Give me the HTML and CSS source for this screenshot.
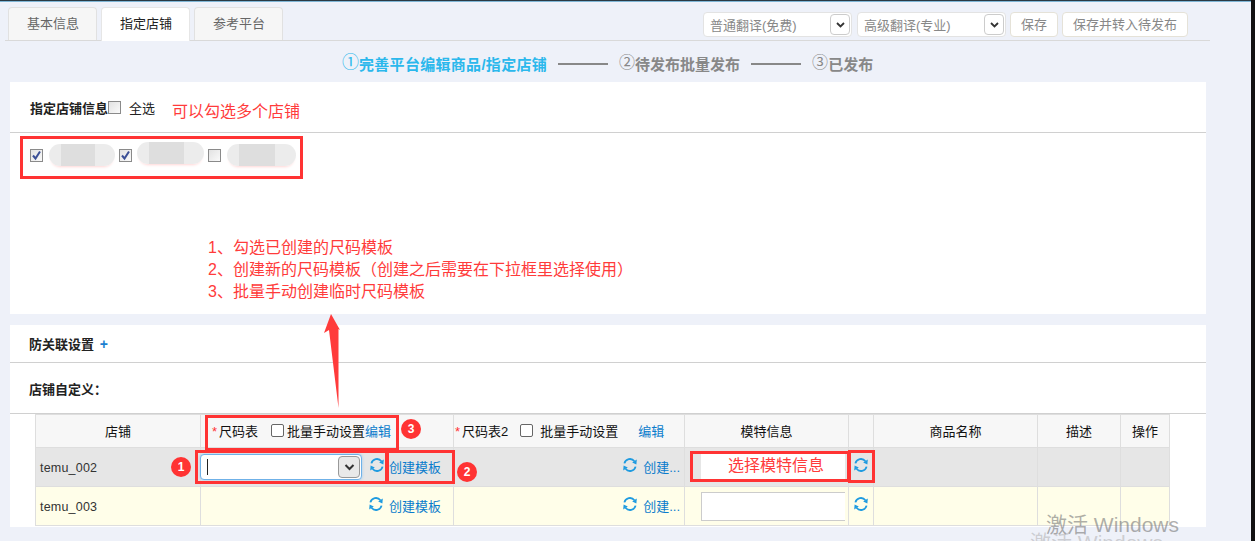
FILE: index.html
```html
<!DOCTYPE html>
<html lang="zh">
<head>
<meta charset="utf-8">
<title>指定店铺</title>
<link rel="stylesheet" href="styles.css">
</head>
<body>
<div class="topline"></div>
<div class="page">
  <div class="tabbar">
    <div class="tabs">
      <div class="tab">基本信息</div>
      <div class="tab active">指定店铺</div>
      <div class="tab">参考平台</div>
    </div>
    <div class="actions">
      <div class="fake-select"><span>普通翻译(免费)</span><i class="arrow"><svg width="9" height="6" viewBox="0 0 9 6"><path d="M1 1l3.5 3.5L8 1" fill="none" stroke="#333" stroke-width="1.8"/></svg></i></div>
      <div class="fake-select"><span>高级翻译(专业)</span><i class="arrow"><svg width="9" height="6" viewBox="0 0 9 6"><path d="M1 1l3.5 3.5L8 1" fill="none" stroke="#333" stroke-width="1.8"/></svg></i></div>
      <div class="btn b1">保存</div>
      <div class="btn b2">保存并转入待发布</div>
    </div>
  </div>
  <div class="steps">
    <span class="step on"><em>①</em>完善平台编辑商品/指定店铺</span>
    <span class="line"></span>
    <span class="step"><em>②</em>待发布批量发布</span>
    <span class="line"></span>
    <span class="step"><em>③</em>已发布</span>
  </div>
  <section class="panel p1">
    <div class="shop-head">
      <b>指定店铺信息</b><span class="cb"></span><span class="all">全选</span>
    </div>
    <div class="shop-list">
      <span class="cb checked"><svg width="13" height="13" viewBox="0 0 13 13"><path d="M3 6.5l2.5 3L10 2.5" fill="none" stroke="#3b4f96" stroke-width="2"/></svg></span><span class="blur b-a"></span>
      <span class="cb checked"><svg width="13" height="13" viewBox="0 0 13 13"><path d="M3 6.5l2.5 3L10 2.5" fill="none" stroke="#3b4f96" stroke-width="2"/></svg></span><span class="blur b-b"></span>
      <span class="cb"></span><span class="blur b-c"></span>
    </div>
  </section>
  <section class="panel p2">
    <div class="rel-row"><b>防关联设置</b> <span class="plus">+</span></div>
    <div class="custom-row"><b>店铺自定义：</b></div>
    <table class="grid">
      <colgroup>
        <col class="c1"><col class="c2"><col class="c3"><col class="c4"><col class="c5"><col class="c6"><col class="c7"><col class="c8">
      </colgroup>
      <thead>
        <tr>
          <th>店铺</th>
          <th class="left size1"><span class="req">*</span>尺码表<span class="tick t1"></span>批量手动设置<a class="link">编辑</a></th>
          <th class="left size2"><span class="req">*</span>尺码表2<span class="tick t2"></span>批量手动设置<a class="link l2">编辑</a></th>
          <th>模特信息</th>
          <th></th>
          <th>商品名称</th>
          <th>描述</th>
          <th>操作</th>
        </tr>
      </thead>
      <tbody>
        <tr class="r1">
          <td class="shop">temu_002</td>
          <td class="tools">
            <div class="tool-wrap">
              <div class="combo"><span class="caret"></span><i class="arrow big"><svg width="11" height="7" viewBox="0 0 11 7"><path d="M1.5 1l4 4 4-4" fill="none" stroke="#333" stroke-width="2"/></svg></i></div>
              <svg class="sync" viewBox="0 0 16 16"><use href="#sync"/></svg>
              <a class="link near">创建模板</a>
            </div>
          </td>
          <td class="tools">
            <div class="tool-wrap end"><svg class="sync" viewBox="0 0 16 16"><use href="#sync"/></svg><a class="link">创建...</a></div>
          </td>
          <td class="model"><div class="model-box"></div></td>
          <td class="only-sync"><svg class="sync" viewBox="0 0 16 16"><use href="#sync"/></svg></td>
          <td></td><td></td><td></td>
        </tr>
        <tr class="r2">
          <td class="shop">temu_003</td>
          <td class="tools">
            <div class="tool-wrap end wide"><svg class="sync" viewBox="0 0 16 16"><use href="#sync"/></svg><a class="link">创建模板</a></div>
          </td>
          <td class="tools">
            <div class="tool-wrap end"><svg class="sync" viewBox="0 0 16 16"><use href="#sync"/></svg><a class="link">创建...</a></div>
          </td>
          <td class="model"><div class="model-box"></div></td>
          <td class="only-sync"><svg class="sync" viewBox="0 0 16 16"><use href="#sync"/></svg></td>
          <td></td><td></td><td></td>
        </tr>
      </tbody>
    </table>
  </section>
</div>

<svg class="defs" width="0" height="0"><defs>
  <symbol id="sync" viewBox="0 0 16 16">
    <path d="M2.4 6.4A5.7 5.7 0 0 1 12.4 4.2" fill="none" stroke="#1f9be0" stroke-width="1.8"/>
    <path d="M14.8 2.6l-.4 4.8-4.2-2z" fill="#1f9be0"/>
    <path d="M13.6 9.6A5.7 5.7 0 0 1 3.6 11.8" fill="none" stroke="#1f9be0" stroke-width="1.8"/>
    <path d="M1.2 13.4l.4-4.8 4.2 2z" fill="#1f9be0"/>
  </symbol>
</defs></svg>

<!-- annotations drawn over the page -->
<div class="note n-multi">可以勾选多个店铺</div>
<div class="note n-list">1、勾选已创建的尺码模板<br>2、创建新的尺码模板（创建之后需要在下拉框里选择使用）<br>3、批量手动创建临时尺码模板</div>
<div class="note n-model">选择模特信息</div>
<div class="rbox x-shops"></div>
<div class="rbox x-head"></div>
<div class="rbox x-combo"></div>
<div class="rbox x-create"></div>
<div class="rbox x-model"></div>
<div class="rbox x-sync"></div>
<div class="dot d1">1</div>
<div class="dot d2">2</div>
<div class="dot d3">3</div>
<svg class="up-arrow" width="18" height="96" viewBox="0 0 18 96"><path d="M8 1L17 17 15.5 16 15.5 95 6 17 1 20z" fill="#ff3b3b"/></svg>
<div class="watermark w1">激活 Windows</div>
<div class="watermark w2">激活 Windows</div>
<div class="edge"></div>
</body>
</html>
```
FILE: styles.css
```css
* { box-sizing: border-box; }
html, body { margin: 0; padding: 0; }
body {
  width: 1255px;
  height: 541px;
  overflow: hidden;
  position: relative;
  background: #eef1f9;
  font-family: "Liberation Sans", "Noto Sans CJK SC", sans-serif;
  font-size: 13px;
  color: #222;
}
.defs { position: absolute; }
.topline { height: 2px; background: linear-gradient(#2a3a44 50%, #7fb6d6 50%); }
.page { padding: 5px 0 0 5px; width: 1210px; }
.tabbar {
  display: flex;
  justify-content: space-between;
  height: 34px;
  border-bottom: 1px solid #d9d9d9;
  padding-left: 3px;
}
.tabs { display: flex; gap: 4px; }
.tab {
  width: 89px;
  height: 33px;
  background: #f6f6f6;
  border: 1px solid #e1e1e1;
  border-bottom: 0;
  border-radius: 4px 4px 0 0;
  text-align: center;
  line-height: 31px;
  padding-left: 1px;
  color: #666;
  font-size: 13px;
}
.tab.active { background: #fff; color: #222; height: 34px; border-color: #e6e6e6; }
.actions { display: flex; gap: 4px; padding: 5px 22px 0 0; align-items: flex-start; color: #888; font-size: 13px; }
.fake-select {
  width: 149px;
  height: 25px;
  background: #fff;
  border: 1px solid #e3e3e3;
  border-radius: 4px;
  display: flex;
  align-items: center;
  justify-content: space-between;
  padding: 0 1px 0 6px;
}
.fake-select + .fake-select { margin-left: 1px; }
.arrow {
  width: 20px;
  height: 21px;
  border: 1px solid #ccc;
  border-radius: 4px;
  display: flex;
  align-items: center;
  justify-content: center;
  background: #fff;
}
.btn {
  height: 25px;
  line-height: 23px;
  background: #fff;
  border: 1px solid #e5e2d8;
  border-radius: 4px;
  text-align: center;
}
.b1 { width: 48px; }
.b2 { width: 126px; }
.steps {
  height: 41px;
  display: flex;
  align-items: center;
  padding: 2px 0 0 337px;
  font-size: 15px;
  font-weight: bold;
  color: #888;
}
.step em { font-style: normal; font-weight: normal; font-size: 16px; position: relative; top: -2px; }
.step.on { color: #2bb8ec; letter-spacing: .3px; }
.step.on em { font-size: 17px; letter-spacing: 0; }
.line { width: 50px; height: 2px; background: #888; margin: 2px 11px 0; }
.panel { background: #fff; margin-left: 5px; width: 1196px; }
.p1 { height: 232px; }
.shop-head {
  height: 51px;
  border-bottom: 1px solid #d0d0d0;
  padding: 1px 0 0 20px;
  display: flex;
  align-items: center;
  font-size: 13px;
}
.all { margin-left: 8px; color: #222; }
.cb {
  display: inline-block;
  flex: none;
  width: 13px;
  height: 13px;
  border: 1px solid #8a8a8a;
  background: linear-gradient(135deg, #e2e2e2, #fafafa);
  vertical-align: middle;
}
.cb svg { display: block; margin: -1px; }
.shop-list {
  display: flex;
  align-items: center;
  padding: 11px 0 0 20px;
}
.blur { display: block; height: 22px; border-radius: 11px; background: linear-gradient(90deg, #ececec 0 18%, #dedede 18% 70%, #ececec 70%); box-shadow: 0 3px 3px -2px #ffd6d6; }
.b-a { width: 66px; margin: 0 4px 0 6px; }
.b-b { width: 67px; margin: -4px 4px 0 5px; }
.b-c { width: 69px; margin: 0 0 0 6px; }
.p2 { height: 202px; margin-top: 11px; }
.rel-row {
  height: 38px;
  border-bottom: 1px solid #d0d0d0;
  padding: 12px 0 0 19px;
  line-height: 14px;
}
.plus { color: #1a7fd0; font-size: 14px; margin-left: 2px; font-weight: bold; }
.custom-row {
  height: 51px;
  border-bottom: 1px solid #d0d0d0;
  padding: 20px 0 0 19px;
  line-height: 14px;
}
.grid {
  border-collapse: collapse;
  table-layout: fixed;
  width: 1134px;
  margin-left: 25px;
  border-left: 1px solid #dcdcdc;
  border-right: 1px solid #dcdcdc;
}
.c1 { width: 165px; } .c2 { width: 253px; } .c3 { width: 231px; } .c4 { width: 164px; }
.c5 { width: 25px; } .c6 { width: 164px; } .c7 { width: 83px; } .c8 { width: 49px; }
.grid th, .grid td { border: 1px solid #dedede; padding: 0; }
.grid th { height: 33px; background: #f7f7f7; font-weight: normal; color: #111; font-size: 13px; padding-bottom: 1px; }
.grid th.left { text-align: left; white-space: nowrap; padding-left: 11px; }
.grid th.size2 { padding-left: 1px; }
.req { color: #f33; margin-right: 2px; }
.tick {
  display: inline-block;
  width: 13px;
  height: 13px;
  border: 1px solid #666;
  border-radius: 2px;
  background: #fff;
  vertical-align: -1px;
}
.t1 { margin: 0 3px 0 13px; }
.t2 { margin: 0 7px 0 12px; }
.link { color: #0a7ccc; font-size: 13px; }
.l2 { margin-left: 20px; }
.r1 td { height: 39px; background: #e6e6e6; }
.r2 td { height: 39px; background: #fffee9; }
.grid td.shop { padding: 1px 0 0 4px; color: #333; font-size: 12.5px; letter-spacing: .2px; }
.tool-wrap { display: flex; align-items: center; padding: 0 4px 2px 0; }
.tool-wrap.end { justify-content: flex-end; }
.tool-wrap.wide { padding-right: 12px; }
.combo {
  width: 162px;
  height: 26px;
  background: #fff;
  border: 1px solid #6fb1e8;
  border-radius: 4px;
  box-shadow: 0 0 3px #9ecbf0;
  margin: 2px 7px 0 -1px;
  display: flex;
  align-items: center;
  justify-content: space-between;
  padding: 0 1px 0 6px;
}
.caret { width: 1px; height: 16px; background: #222; }
.arrow.big { width: 22px; height: 22px; background: #e9e9e9; border-color: #999; }
.sync { width: 16px; height: 16px; flex: none; margin-bottom: 2px; }
.tool-wrap .link { margin-left: 5px; }
.tool-wrap .link.near { margin-left: 4px; }
.grid td.model { padding-left: 16px; }
.model-box { width: 144px; height: 29px; background: #fff; border: 1px solid #ccc; border-right: 0; }
.r1 .model-box { border: 0; }
.only-sync { text-align: center; }
.only-sync .sync { display: block; margin: -4px auto 0; }

.note { position: absolute; color: #ff3b3b; }
.n-multi { left: 172px; top: 102px; font-size: 16px; line-height: 20px; }
.n-list { left: 208px; top: 237px; font-size: 16px; line-height: 22px; white-space: nowrap; }
.n-model { left: 728px; top: 456px; font-size: 16px; line-height: 20px; }
.rbox { position: absolute; border: 3px solid #ff3333; }
.x-shops { left: 20px; top: 136px; width: 283px; height: 43px; }
.x-head { left: 205px; top: 415px; width: 194px; height: 36px; }
.x-combo { left: 195px; top: 450px; width: 193px; height: 34px; }
.x-create { left: 386px; top: 450px; width: 69px; height: 34px; }
.x-model { left: 690px; top: 451px; width: 160px; height: 31px; }
.x-sync { left: 848px; top: 450px; width: 27px; height: 33px; }
.dot {
  position: absolute;
  width: 20px;
  height: 20px;
  border-radius: 50%;
  background: #f33;
  color: #fff;
  font-size: 12px;
  font-weight: bold;
  line-height: 20px;
  text-align: center;
}
.d1 { left: 171px; top: 457px; }
.d2 { left: 457px; top: 462px; }
.d3 { left: 401px; top: 419px; }
.up-arrow { position: absolute; left: 323px; top: 313px; }
.watermark { position: absolute; color: rgba(120,120,120,.6); font-size: 21px; white-space: nowrap; }
.w1 { left: 1046px; top: 508px; }
.w2 { left: 1030px; top: 526px; color: rgba(150,150,150,.4); }
.edge { position: absolute; right: 0; top: 0; width: 4px; height: 100%; background: #111; }
```
